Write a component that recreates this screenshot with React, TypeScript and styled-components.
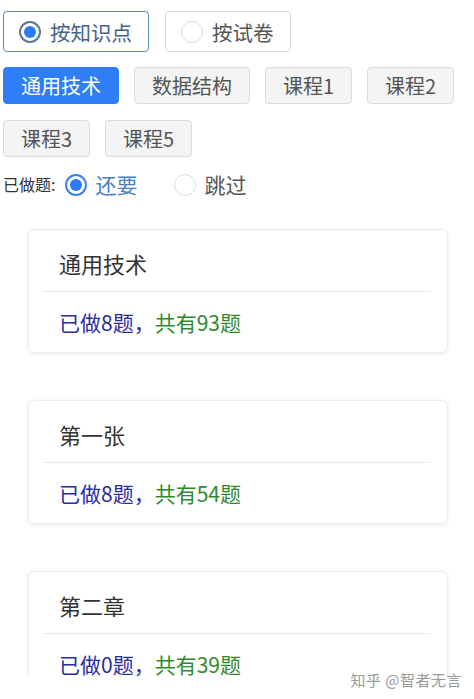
import React, { useState } from 'react';
import styled, { createGlobalStyle } from 'styled-components';

const GlobalStyle = createGlobalStyle`
  html, body {
    margin: 0;
    padding: 0;
    background: #ffffff;
  }
  body {
    font-family: "Noto Sans CJK SC", "Noto Sans", "Liberation Sans", sans-serif;
    color: #333;
    line-height: 1.2;
  }
`;

const Root = styled.div`
  position: relative;
  width: 474px;
  height: 699px;
  background: #fff;
`;

const Viewport = styled.div`
  height: 676px;
  overflow: hidden;
  padding: 11px 0 0 3px;
  box-sizing: border-box;
`;

const Row = styled.div<{ $gap?: number; $mb?: number }>`
  display: flex;
  align-items: center;
  flex-wrap: wrap;
  gap: 16px ${(p) => p.$gap ?? 15}px;
  margin-bottom: ${(p) => p.$mb ?? 16}px;
`;

const ModeButton = styled.button<{ $active?: boolean }>`
  display: flex;
  align-items: center;
  gap: 9px;
  height: 41px;
  padding: 0 16px 0 15px;
  box-sizing: border-box;
  border-radius: 4px;
  background: #fff;
  border: 1.5px solid ${(p) => (p.$active ? '#5b86c4' : '#dcdcdc')};
  font-family: inherit;
  font-size: 20.5px;
  color: ${(p) => (p.$active ? '#46618d' : '#555')};
  cursor: pointer;
`;

const Radio = styled.span<{ $checked?: boolean; $tone?: 'slate' | 'blue' }>`
  position: relative;
  width: 22px;
  height: 22px;
  border-radius: 50%;
  box-sizing: border-box;
  flex-shrink: 0;
  border: ${(p) =>
    p.$checked
      ? `2px solid ${p.$tone === 'slate' ? '#5f7699' : '#3a82e6'}`
      : '1.5px solid #dedede'};
  background: #fff;
  &::after {
    content: '';
    display: ${(p) => (p.$checked ? 'block' : 'none')};
    position: absolute;
    left: 50%;
    top: 50%;
    width: 12px;
    height: 12px;
    margin: -6px 0 0 -6px;
    border-radius: 50%;
    background: #2a7cf4;
  }
`;

const Tag = styled.button<{ $active?: boolean }>`
  height: 37px;
  padding: 0 17px;
  box-sizing: border-box;
  border-radius: 4px;
  font-family: inherit;
  font-size: 20px;
  border: 1px solid ${(p) => (p.$active ? '#2d7ef7' : '#dcdcdc')};
  background: ${(p) => (p.$active ? '#2d7ef7' : '#f4f4f5')};
  color: ${(p) => (p.$active ? '#fff' : '#555')};
  cursor: pointer;
`;

const FilterRow = styled.div`
  display: flex;
  align-items: center;
  height: 26px;
  margin-top: 15px;
  margin-bottom: 31px;
`;

const FilterLabel = styled.span`
  font-size: 16px;
  color: #333;
  margin-right: 10px;
`;

const Choice = styled.label<{ $checked?: boolean }>`
  display: flex;
  align-items: center;
  gap: 8px;
  margin-right: 37px;
  font-size: 21px;
  color: ${(p) => (p.$checked ? '#4a80c9' : '#555')};
  cursor: pointer;
`;

const CardList = styled.div`
  display: flex;
  flex-direction: column;
  gap: 47px;
  margin-left: 25px;
  width: 420px;
`;

const Card = styled.div`
  background: #fff;
  border: 1px solid #ececec;
  border-radius: 6px;
  box-shadow: 0 1px 5px rgba(0, 0, 0, 0.08);
  padding: 0 16px 0 14px;
  box-sizing: border-box;
`;

const CardTitle = styled.div`
  height: 62px;
  box-sizing: border-box;
  display: flex;
  align-items: center;
  padding: 5px 0 0 16px;
  font-size: 22px;
  color: #333;
  border-bottom: 1px solid #eaeaea;
`;

const CardBody = styled.div`
  height: 60px;
  display: flex;
  align-items: center;
  padding-left: 16px;
  font-size: 21px;
  line-height: 1;
`;

const Done = styled.span`
  color: #2c2ca0;
`;

const Total = styled.span`
  color: #2e8a2e;
`;

const Watermark = styled.div`
  position: absolute;
  right: 12px;
  top: 671px;
  font-size: 15px;
  color: #9a9a9a;
  letter-spacing: 0.5px;
`;

const courses = ['通用技术', '数据结构', '课程1', '课程2', '课程3', '课程5'];

const chapters = [
  { title: '通用技术', done: 8, total: 93 },
  { title: '第一张', done: 8, total: 54 },
  { title: '第二章', done: 0, total: 39 },
];

export default function App() {
  const [mode, setMode] = useState<'point' | 'paper'>('point');
  const [course, setCourse] = useState('通用技术');
  const [redo, setRedo] = useState(true);

  return (
    <>
      <GlobalStyle />
      <Root>
        <Viewport>
          <Row $gap={16} $mb={15}>
            <ModeButton $active={mode === 'point'} onClick={() => setMode('point')}>
              <Radio $checked={mode === 'point'} $tone="slate" />
              按知识点
            </ModeButton>
            <ModeButton $active={mode === 'paper'} onClick={() => setMode('paper')}>
              <Radio $checked={mode === 'paper'} $tone="slate" />
              按试卷
            </ModeButton>
          </Row>
          <Row $mb={0}>
            {courses.map((c) => (
              <Tag key={c} $active={course === c} onClick={() => setCourse(c)}>
                {c}
              </Tag>
            ))}
          </Row>
          <FilterRow>
            <FilterLabel>已做题:</FilterLabel>
            <Choice $checked={redo} onClick={() => setRedo(true)}>
              <Radio $checked={redo} $tone="blue" />
              还要
            </Choice>
            <Choice $checked={!redo} onClick={() => setRedo(false)}>
              <Radio $checked={!redo} $tone="blue" />
              跳过
            </Choice>
          </FilterRow>
          <CardList>
            {chapters.map((ch) => (
              <Card key={ch.title}>
                <CardTitle>{ch.title}</CardTitle>
                <CardBody>
                  <Done>已做{ch.done}题，</Done>
                  <Total>共有{ch.total}题</Total>
                </CardBody>
              </Card>
            ))}
          </CardList>
        </Viewport>
        <Watermark>知乎 @智者无言</Watermark>
      </Root>
    </>
  );
}
